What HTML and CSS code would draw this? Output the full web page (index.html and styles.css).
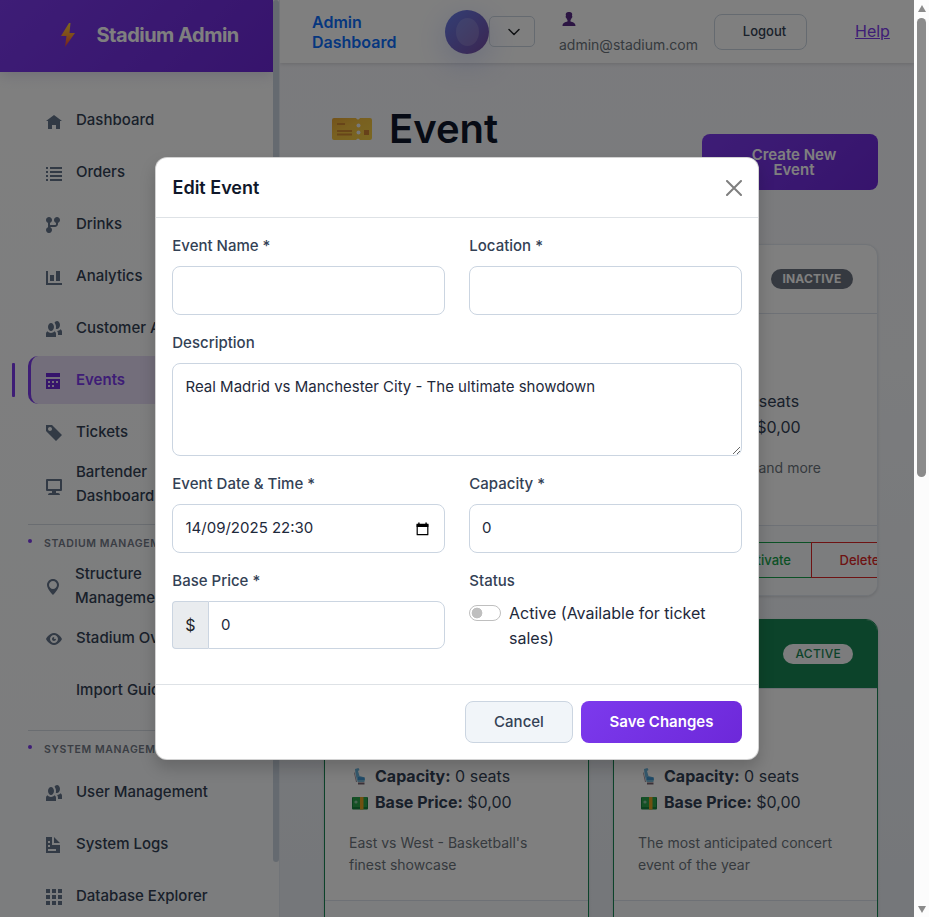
FILE: index.html
```html
<!DOCTYPE html>
<html lang="en">
<head>
<meta charset="utf-8">
<title>Stadium Admin</title>
<link rel="stylesheet" href="styles.css">
</head>
<body>
<svg class="defs" aria-hidden="true">
  <defs>
    <linearGradient id="bolt" x1="0" y1="0" x2="0" y2="1"><stop offset="0" stop-color="#ffd23c"/><stop offset=".5" stop-color="#ff9a35"/><stop offset="1" stop-color="#f0433a"/></linearGradient>
    <linearGradient id="gold" x1="0" y1="0" x2="1" y2="1"><stop offset="0" stop-color="#e8a735"/><stop offset=".4" stop-color="#f2c040"/><stop offset="1" stop-color="#f5cf45"/></linearGradient>
    <symbol id="seat" viewBox="0 0 16 18"><path d="M3 1l3.500-1 1 2-1.500 1 1.500 5 5.500 1.500v3H5L3.500 6z" fill="#6db4dc"/><path d="M2.500 4l2.500 10H4L2 5z" fill="#9b8d9b"/><path d="M6 9l6 .5.5 2.500H6z" fill="#3f94d0"/><path d="M5.500 12h7v2h-7z" fill="#79b6d4"/><path d="M6 14.500h6.500v2H6z" fill="#75606f"/></symbol>
    <symbol id="cash" viewBox="0 0 16 14"><rect x="0" y="1" width="16" height="12.500" rx="1" fill="#16803c"/><rect x="1" y="1" width="14" height="10" fill="#2aa34a"/><circle cx="4" cy="6" r="1.600" fill="#8dc8a0"/><rect x="8" y="1" width="3.500" height="12.500" fill="#e0a022"/></symbol>
  </defs>
</svg>
<div class="app">
  <aside class="sidebar">
    <div class="brand">
      <svg class="bolt" viewBox="0 0 14 24"><path d="M8 0L0 13h5.500L4 24l10-14H8.500L9.500 0z" fill="url(#bolt)"/></svg>
      <span>Stadium Admin</span>
    </div>
    <nav class="nav">
      <a class="item"><svg viewBox="0 0 8 8"><path transform="translate(0 1)" d="M4 0l-4 3h1v4h2v-2h2v2h2v-4.030l1 .030-4-3z"/></svg><span>Dashboard</span></a>
      <a class="item"><svg viewBox="0 0 8 8"><path transform="translate(0 1)" d="M0 0v1h1v-1zM2 0v1h6v-1zM0 2v1h1v-1zM2 2v1h6v-1zM0 4v1h1v-1zM2 4v1h6v-1zM0 6v1h1v-1zM2 6v1h6v-1z"/></svg><span>Orders</span></a>
      <a class="item"><svg viewBox="0 0 8 8"><path d="M1.500 0c-.83 0-1.500.67-1.500 1.500 0 .66.41 1.200 1 1.410v2.190c-.59.2-1 .75-1 1.410 0 .83.67 1.500 1.500 1.500s1.500-.67 1.500-1.500c0-.6-.34-1.100-.84-1.340.09-.09.21-.16.34-.16h2c.82 0 1.500-.68 1.500-1.500v-.59c.59-.2 1-.75 1-1.410 0-.83-.67-1.500-1.500-1.500s-1.500.67-1.500 1.500c0 .66.41 1.200 1 1.410v.59c0 .28-.22.5-.5.5h-2c-.17 0-.35.04-.5.09v-1.190c.59-.2 1-.75 1-1.410 0-.83-.67-1.500-1.500-1.500z"/></svg><span>Drinks</span></a>
      <a class="item"><svg viewBox="0 0 8 8"><path transform="translate(0 1)" d="M0 0v7h8v-1h-7v-6h-1zm5 0v5h2v-5h-2zm-3 2v3h2v-3h-2z"/></svg><span>Analytics</span></a>
      <a class="item"><svg viewBox="0 0 8 8"><path d="M5.500 0c-.51 0-.95.35-1.220.88.45.54.72 1.280.72 2.130 0 .29-.03.55-.09.81.19.11.38.19.59.19.83 0 1.500-.9 1.500-2s-.67-2-1.500-2zm-3 1c-.83 0-1.500.9-1.500 2s.67 2 1.500 2 1.500-.9 1.500-2-.67-2-1.500-2zm4.750 3.160c-.43.51-1.020.82-1.690.84.27.38.44.84.44 1.340v.66h2v-1.660c0-.52-.31-.97-.75-1.190zm-6.500 1c-.44.22-.75.67-.75 1.190v1.660h5v-1.660c0-.52-.31-.97-.75-1.190-.45.53-1.060.84-1.750.84s-1.300-.32-1.750-.84z"/></svg><span>Customer Analytics</span></a>
      <a class="item active"><svg viewBox="0 0 8 8"><path d="M0 0v2h7v-2h-7zm0 3v5h7v-5h-7zm1 1h1v1h-1v-1zm2 0h1v1h-1v-1zm2 0h1v1h-1v-1zm-4 2h1v1h-1v-1zm2 0h1v1h-1v-1z"/></svg><span>Events</span></a>
      <a class="item"><svg viewBox="0 0 8 8"><path d="M0 0v3l5 5 3-3-5-5h-3zm2 1c.55 0 1 .45 1 1s-.45 1-1 1-1-.45-1-1 .45-1 1-1z"/></svg><span>Tickets</span></a>
      <a class="item tall"><svg viewBox="0 0 8 8"><path d="M.5 0a.5.500 0 0 0-.5.500v5a.5.500 0 0 0 .5.500h2.500v1h-1c-.55 0-1 .45-1 1h6c0-.55-.45-1-1-1h-1v-1h2.500a.5.500 0 0 0 .5-.5v-5a.5.500 0 0 0-.5-.5zm.5 1h6v4h-6v-4z"/></svg><span>Bartender<br>Dashboard</span></a>
      <div class="section">STADIUM MANAGEMENT</div>
      <a class="item pin"><svg viewBox="-1 0 8 8"><path d="M3 0c-1.660 0-3 1.340-3 3 0 2 3 5 3 5s3-3 3-5c0-1.660-1.340-3-3-3zm0 1c1.110 0 2 .9 2 2 0 1.110-.89 2-2 2-1.100 0-2-.89-2-2 0-1.100.9-2 2-2z"/></svg><span>Structure<br>Management</span></a>
      <a class="item"><svg viewBox="0 0 8 8"><path transform="translate(0 1)" d="M4.030 0c-2.530 0-4.030 3-4.030 3s1.500 3 4.030 3c2.470 0 3.970-3 3.970-3s-1.500-3-3.970-3zm-.03 1c1.110 0 2 .9 2 2 0 1.110-.89 2-2 2-1.100 0-2-.89-2-2 0-1.100.9-2 2-2zm0 1c-.55 0-1 .45-1 1s.45 1 1 1 1-.45 1-1c0-.1-.04-.19-.06-.28-.08.16-.24.28-.44.28-.28 0-.5-.22-.5-.5 0-.2.12-.36.28-.44-.09-.03-.18-.06-.28-.06z"/></svg><span>Stadium Overview</span></a>
      <a class="item"><svg viewBox="0 0 8 8"></svg><span>Import Guide</span></a>
      <div class="section">SYSTEM MANAGEMENT</div>
      <a class="item"><svg viewBox="0 0 8 8"><path d="M5.500 0c-.51 0-.95.35-1.220.88.45.54.72 1.280.72 2.130 0 .29-.03.55-.09.81.19.11.38.19.59.19.83 0 1.500-.9 1.500-2s-.67-2-1.500-2zm-3 1c-.83 0-1.500.9-1.500 2s.67 2 1.500 2 1.500-.9 1.500-2-.67-2-1.500-2zm4.750 3.160c-.43.51-1.020.82-1.690.84.27.38.44.84.44 1.340v.66h2v-1.660c0-.52-.31-.97-.75-1.190zm-6.500 1c-.44.22-.75.67-.75 1.190v1.660h5v-1.660c0-.52-.31-.97-.75-1.190-.45.53-1.060.84-1.750.84s-1.300-.32-1.750-.84z"/></svg><span>User Management</span></a>
      <a class="item"><svg viewBox="0 0 8 8"><path d="M0 0v8h7v-4h-4v-4h-3zm4 0v3h3l-3-3zm-3 2h1v1h-1v-1zm0 2h1v1h-1v-1zm0 2h4v1h-4v-1z"/></svg><span>System Logs</span></a>
      <a class="item"><svg viewBox="0 0 8 8"><path d="M0 0v2h2v-2zM3 0v2h2v-2zM6 0v2h2v-2zM0 3v2h2v-2zM3 3v2h2v-2zM6 3v2h2v-2zM0 6v2h2v-2zM3 6v2h2v-2zM6 6v2h2v-2z"/></svg><span>Database Explorer</span></a>
    </nav>
    <div class="side-thumb"></div>
  </aside>

  <div class="main">
    <header class="topbar">
      <div class="title">Admin Dashboard</div>
      <div class="avatar"><span></span></div>
      <div class="drop"><svg viewBox="0 0 12 8"><path d="M1 1.500l5 5 5-5" fill="none" stroke="#212529" stroke-width="1.500" stroke-linecap="round" stroke-linejoin="round"/></svg></div>
      <div class="user">
        <svg viewBox="0 0 14 14"><path d="M4 4c-.8-3 .5-4 3-4s3.800 1 3 4c.7 0 .3 2-.4 2-.3 1-.6 1.500-1.100 2v1.500c2 .8 5 1 5 4.500H.5c0-3.500 3-3.700 5-4.500V8c-.5-.5-.8-1-1.100-2-.7 0-1.100-2-.4-2z" fill="#582a87"/></svg>
        <span>admin@stadium.com</span>
      </div>
      <button class="logout">Logout</button>
      <a class="help">Help</a>
    </header>
    <section class="page">
      <div class="heading">
        <svg class="ticket" viewBox="0 0 40 22"><path d="M2 0h22q2 3 4 0h10q2 0 2 2v18q0 2-2 2H28q-2-3-4 0H2q-2 0-2-2V2q0-2 2-2z" fill="url(#gold)"/><path d="M5 6h8M5 13h15M5 16.500h15" stroke="#d08a33" stroke-width="1.800"/><circle cx="26.500" cy="7.500" r="2" fill="#eef0f4"/><circle cx="26.500" cy="14.500" r="2" fill="#eef0f4"/><rect x="32" y="12" width="5" height="5" fill="#cf8233"/></svg>
        <h1>Event</h1>
        <button class="create">Create New Event</button>
      </div>
      <div class="cards">
        <article class="card"></article>
        <article class="card">
          <div class="card-head"><span class="badge">INACTIVE</span></div>
          <div class="card-body">
            <p><svg><use href="#seat"/></svg><b>Capacity:</b> 0 seats</p>
            <p><svg><use href="#cash"/></svg><b>Base Price:</b> $0,00</p>
            <div class="desc">Live music, opera and more</div>
          </div>
          <div class="card-foot"><button class="edit">Edit</button><button class="activate">Activate</button><button class="delete">Delete</button></div>
        </article>
        <article class="card on">
          <div class="card-head"><span class="badge">ACTIVE</span></div>
          <div class="card-body">
            <p><svg><use href="#seat"/></svg><b>Capacity:</b> 0 seats</p>
            <p><svg><use href="#cash"/></svg><b>Base Price:</b> $0,00</p>
            <div class="desc">East vs West - Basketball's finest showcase</div>
          </div>
          <div class="card-foot"></div>
        </article>
        <article class="card on">
          <div class="card-head"><span class="badge">ACTIVE</span></div>
          <div class="card-body">
            <p><svg><use href="#seat"/></svg><b>Capacity:</b> 0 seats</p>
            <p><svg><use href="#cash"/></svg><b>Base Price:</b> $0,00</p>
            <div class="desc">The most anticipated concert event of the year</div>
          </div>
          <div class="card-foot"></div>
        </article>
      </div>
    </section>
  </div>
  <div class="scroll"><i class="up"></i><div class="thumb"></div><i class="down"></i></div>
</div>

<div class="backdrop">
  <div class="modal">
    <div class="modal-head"><h5>Edit Event</h5><svg viewBox="0 0 16 16"><path d="M1 1l14 14M15 1L1 15" stroke="#7f7f7f" stroke-width="2" stroke-linecap="round"/></svg></div>
    <form class="modal-body">
      <div class="field"><label>Event Name *</label><input type="text"></div>
      <div class="field"><label>Location *</label><input type="text"></div>
      <div class="field wide"><label>Description</label><textarea>Real Madrid vs Manchester City - The ultimate showdown</textarea></div>
      <div class="field"><label>Event Date &amp; Time *</label>
        <div class="date"><span>14/09/2025 22:30</span><svg viewBox="0 0 13 14"><path d="M1.200 2.500h10.600v10.200H1.200z" fill="none" stroke="#000" stroke-width="1.200" stroke-linejoin="round"/><path d="M.6 1.800h11.800V5H.6zM2.200.5h1.400v2H2.200zM9.400.5h1.400v2H9.400z"/></svg></div></div>
      <div class="field"><label>Capacity *</label><input type="text" value="0"></div>
      <div class="field"><label>Base Price *</label><div class="group"><span>$</span><input type="text" value="0"></div></div>
      <div class="field"><label>Status</label><div class="switch"><i></i><span>Active (Available for ticket sales)</span></div></div>
    </form>
    <div class="modal-foot"><button class="cancel">Cancel</button><button class="save">Save Changes</button></div>
  </div>
</div>
</body>
</html>
```
FILE: styles.css
```css
* { box-sizing: border-box; }
body { margin: 0; width: 929px; height: 917px; overflow: hidden; position: relative; font-family: Inter, "Liberation Sans", sans-serif; font-size: 16px; color: #1e293b; }
button, input, textarea { font-family: inherit; margin: 0; }
h1, h5, p { margin: 0; }
.defs { position: absolute; width: 0; height: 0; }
.app { display: flex; height: 917px; }

.sidebar { position: relative; flex: none; width: 280px; height: 917px; overflow: hidden; background: linear-gradient(#fff, #f8fafc); border-right: 1px solid #e2e8f0; }
.brand { display: flex; align-items: center; gap: 21.500px; width: 273px; height: 72px; padding: 0 0 2px 61px; background: linear-gradient(135deg, #7c3aed, #6d28d9); color: #fff; font-size: 20px; font-weight: 700; letter-spacing: -.5px; box-shadow: 0 4px 12px rgba(100,90,160,.18); }
.bolt { width: 14px; height: 24px; }
.side-thumb { position: absolute; left: 273px; top: 0; width: 6px; height: 862px; border-radius: 3px; background: #cbd5e1; }
.nav { padding: 24px 0 0 28px; width: 273px; }
.item { position: relative; display: flex; align-items: center; gap: 14px; height: 48px; margin-bottom: 4px; padding-left: 18px; font-size: 15px; line-height: 24px; font-weight: 500; color: #334155; white-space: nowrap; }
.item svg { flex: none; width: 16px; height: 16px; fill: #64748b; margin-top: 2px; }
.item.tall svg { margin-top: 6px; }
.item.pin { padding-left: 17px; }
.item.active { padding-left: 15px; border-left: 3px solid #7c3aed; border-radius: 10px 0 0 10px; background: #e6dcf6; color: #7c3aed; font-weight: 600; }
.item.active svg { fill: #6d28d9; }
.item.active::before { content: ""; position: absolute; left: -19px; top: 7px; width: 3px; height: 34px; border-radius: 1px; background: #7c3aed; }
.section { position: relative; height: 38px; margin-top: 16px; padding: 11px 0 0 16px; border-top: 1px solid #d5dae2; font-size: 10.500px; line-height: 16px; font-weight: 600; letter-spacing: .6px; color: #747b88; white-space: nowrap; overflow: hidden; }
.section::before { content: ""; position: absolute; left: 0; top: 14px; width: 4px; height: 4px; border-radius: 50%; background: #7c3aed; }

.main { flex: none; width: 634px; height: 917px; overflow: hidden; background: linear-gradient(#f5f5fa, #f6f8fb 40%, #eaeef4); }
.topbar { display: flex; align-items: center; height: 63px; padding-left: 32px; background: #fff; box-shadow: 0 1px 4px rgba(0,0,0,.14); }
.title { width: 133px; font-weight: 600; line-height: 20px; color: #0d6efd; padding-right: 40px; }
.avatar { display: flex; align-items: center; justify-content: center; flex: none; width: 44px; height: 44px; border-radius: 50%; background: linear-gradient(135deg, #667eea, #764ba2); box-shadow: 0 8px 32px rgba(102,126,234,.3); }
.avatar span { width: 23px; height: 28px; border-radius: 50%; background: rgba(255,255,255,.15); }
.drop { display: flex; align-items: center; justify-content: center; flex: none; width: 46px; height: 31px; padding-left: 3px; border: 1px solid #cbd5e1; border-radius: 5px; }
.drop svg { width: 12px; height: 8px; }
.user { flex: none; width: 179px; padding-left: 24px; font-size: 14px; line-height: 20px; color: #6c757d; }
.user svg { display: block; width: 14px; height: 14px; margin: 3px 0 9px 2.500px; }
.logout { flex: none; width: 93px; height: 36px; padding: 0 0 1px 8px; border: 1px solid #cbd5e1; border-radius: 8px; background: none; font-size: 13px; font-weight: 500; color: #334155; }
.help { margin: -2px 0 0 48px; color: #7c3aed; text-decoration: underline; }
.page { padding: 45px 36px 0 44px; }
.heading { display: flex; height: 136px; }
.ticket { width: 40px; height: 22px; margin: 10px 0 0 7.500px; }
.heading h1 { margin: -4px 0 0 17.500px; font-size: 40px; font-weight: 600; line-height: 50px; color: #0f172a; }
.create { width: 176px; height: 56px; margin: 26px 0 0 auto; padding: 0 36px 0 44px; border: 0; border-radius: 8px; background: linear-gradient(135deg, #7c3aed, #6d28d9); color: #fff; font-size: 15px; font-weight: 600; line-height: 15px; }
.cards { display: grid; grid-template-columns: 265px 265px; gap: 23px 24px; }
.card { height: 352px; border: 1px solid #e2e8f0; border-radius: 12px; background: #fff; overflow: hidden; box-shadow: 0 1px 3px rgba(0,0,0,.12); }
.card.on { border-color: #198754; }
.card-head { display: flex; align-items: center; justify-content: flex-end; height: 69px; padding: 0 24px; border-bottom: 1px solid #dde3ec; }
.on .card-head { background: #198754; }
.badge { height: 20px; padding: 0 11.500px; border-radius: 10px; background: #6b7280; color: #fff; font-size: 12px; line-height: 20px; font-weight: 700; letter-spacing: .2px; }
.on .badge { padding: 0 12px; background: #f8f9fa; color: #198754; font-weight: 500; letter-spacing: .3px; }
.card-body { height: 212px; padding: 74px 24px 0; border-bottom: 1px solid #dde3ec; }
.card-body p { display: flex; align-items: center; gap: 4.500px; line-height: 26px; color: #334155; }
.card-body svg { width: 16px; height: 18px; margin: 2px 2.500px 0 3px; }
.desc { margin-top: 17px; font-size: 14px; line-height: 22px; color: #6c757d; }
.card-foot { display: flex; height: 70px; padding: 16px 24px; background: #f8fafc; }
.card-foot button { flex: none; height: 36px; margin-right: -1px; padding: 0; border: 1px solid #7c3aed; background: none; color: #7c3aed; font-size: 13px; font-weight: 500; }
.card-foot .edit { width: 73px; }
.card-foot .activate { width: 102px; padding-left: 9px; border-color: #16a34a; color: #16a34a; }
.card-foot .delete { width: 97px; border-color: #dc2626; color: #dc2626; }
.scroll { display: flex; flex-direction: column; align-items: center; flex: none; width: 15px; height: 917px; background: #fcfcfc; }
.scroll .thumb { width: 9px; height: 459px; margin-top: 6px; border-radius: 5px; background: #8b8b8b; }
.scroll i { width: 0; height: 0; border: 4.500px solid transparent; }
.scroll .up { margin-top: 5px; border-top: 0; border-bottom: 7px solid #8b8b8b; }
.scroll .down { margin: auto 0 4px; border-bottom: 0; border-top: 7px solid #8b8b8b; }

.backdrop { position: absolute; left: 0; top: 0; width: 914px; height: 917px; padding: 157px 155px; background: rgba(0,0,0,.5); }
.modal { width: 604px; height: 603px; background: #fff; border: 1px solid rgba(0,0,0,.175); border-radius: 12px; box-shadow: 0 8px 16px rgba(0,0,0,.18); }
.modal-head { display: flex; align-items: center; justify-content: space-between; height: 60px; padding: 0 16px; border-bottom: 1px solid #dee2e6; }
.modal-head h5 { font-size: 18px; font-weight: 600; color: #0f172a; padding-left: .5px; }
.modal-head svg { width: 16px; height: 16px; margin-top: 1px; }
.modal-body { display: grid; grid-template-columns: 273px 273px; gap: 16px 24px; height: 466px; padding: 16px; align-content: start; }
.wide { grid-column: span 2; }
.field { display: flex; flex-direction: column; }
label { height: 24px; margin-bottom: 8px; padding-left: .3px; font-size: 15px; line-height: 23px; font-weight: 500; color: #334155; }
.field input, textarea, .date { width: 100%; height: 49px; padding: 0 12px 2px; border: 1px solid #cbd5e1; border-radius: 8px; background: #fff; color: #1e293b; font-size: 15px; }
.field textarea { display: block; height: 93px; padding: 12px 12px 12px 12.500px; line-height: 22.500px; }
.field .date { display: flex; align-items: center; justify-content: space-between; padding-left: 12.500px; padding-right: 15px; }
.date svg { width: 13px; height: 14px; margin-top: 2px; }
.group { display: flex; height: 48px; }
.group span { flex: none; width: 36px; border: 1px solid #cbd5e1; border-right: 0; border-radius: 4px 0 0 4px; background: #e9ecef; line-height: 46px; text-align: center; color: #212529; }
.field .group input { flex: 1; height: 48px; border-radius: 0 8px 8px 0; }
.switch { display: flex; gap: 8px; line-height: 25px; }
.switch i { flex: none; width: 32px; height: 16px; margin-top: 4px; border: 1px solid #bfbfbf; border-radius: 8px; background: radial-gradient(circle at 7px 7px, #bfbfbf 5px, transparent 5.700px); }
.modal-foot { display: flex; justify-content: flex-end; gap: 8px; padding: 16px; border-top: 1px solid #dee2e6; }
.modal-foot button { height: 42px; padding: 0 0 1px; border-radius: 8px; font-size: 15px; font-weight: 500; }
.modal-foot .cancel { width: 108px; border: 1px solid #cbd5e1; background: #f1f5f9; color: #334155; }
.modal-foot .save { width: 161px; border: 0; background: linear-gradient(135deg, #7c3aed, #6d28d9); color: #fff; font-weight: 600; }
```
